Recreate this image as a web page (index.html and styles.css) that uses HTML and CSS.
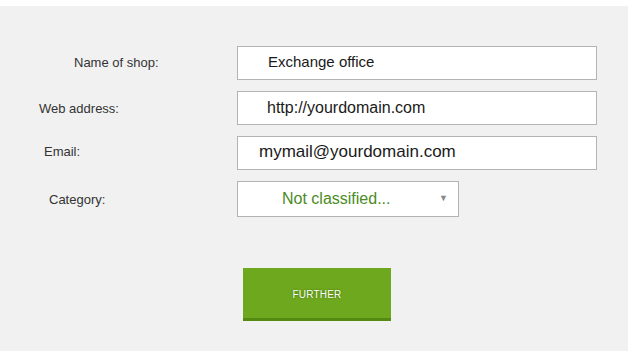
FILE: index.html
```html
<!DOCTYPE html>
<html lang="en">
<head>
    <meta charset="UTF-8">
    <meta name="viewport" content="width=device-width, initial-scale=1.0">
    <title>Shop registration</title>
    <link rel="stylesheet" href="styles.css">
</head>
<body>

    <div class="panel">
        <form class="shop-form">
            <div class="form-row">
                <label class="form-label label-name" for="shopName">Name of shop:</label>
                <input type="text" id="shopName" class="form-input input-name" value="Exchange office">
            </div>
            <div class="form-row">
                <label class="form-label label-web" for="webAddress">Web address:</label>
                <input type="text" id="webAddress" class="form-input input-web" value="http://yourdomain.com">
            </div>
            <div class="form-row">
                <label class="form-label label-email" for="email">Email:</label>
                <input type="text" id="email" class="form-input input-email" value="mymail@yourdomain.com">
            </div>
            <div class="form-row">
                <label class="form-label label-category">Category:</label>
                <div class="form-select">
                    <span class="select-value">Not classified...</span>
                    <span class="select-arrow">&#9660;</span>
                </div>
            </div>
            <div class="button-row">
                <button type="button" class="further-button">FURTHER</button>
            </div>
        </form>
    </div>

</body>
</html>
```

FILE: styles.css
```css
/* Basic Reset */
* {
    margin: 0;
    padding: 0;
    box-sizing: border-box;
}

body {
    font-family: 'Liberation Sans', Arial, sans-serif;
    background-color: #fff;
    color: #333;
}

.panel {
    width: 628px;
    height: 345px;
    margin-top: 6px;
    background-color: #f1f1f1;
    padding-top: 40px;
}

.shop-form {
    display: flex;
    flex-direction: column;
    gap: 11px;
}

.form-row {
    display: flex;
    align-items: center;
}

.form-label {
    width: 237px;
    font-size: 13px;
    color: #333;
}

/* each label sits at its own offset in the original */
.label-name { padding-left: 74px; margin-top: -2px; }
.label-web { padding-left: 39px; }
.label-email { padding-left: 44px; margin-top: -3px; }
.label-category { padding-left: 49px; }

.form-input {
    width: 360px;
    height: 34px;
    border: 1px solid #b3b3b3;
    background-color: #fff;
    font-family: 'Liberation Sans', Arial, sans-serif;
    font-size: 15px;
    color: #1a1a1a;
    outline: none;
}

.input-name { padding-left: 30px; padding-bottom: 3px; }
.input-web { padding-left: 29px; padding-bottom: 1px; font-size: 16px; }
.input-email { padding-left: 21px; padding-bottom: 2px; font-size: 17px; }

.form-select {
    width: 222px;
    height: 36px;
    border: 1px solid #b3b3b3;
    background-color: #fff;
    display: flex;
    align-items: center;
    padding-left: 44px;
    padding-right: 10px;
}

.select-value {
    flex: 1;
    font-size: 16px;
    color: #4b8b1f;
}

.select-arrow {
    font-size: 9px;
    color: #888;
    margin-top: -3px;
}

.button-row {
    padding-left: 243px;
    margin-top: 40px;
}

.further-button {
    width: 148px;
    height: 53px;
    background-color: #6ea81e;
    border: none;
    border-bottom: 3px solid #558a12;
    color: #fff;
    font-family: 'Liberation Sans', Arial, sans-serif;
    font-size: 10px;
    letter-spacing: 0.2px;
    padding-top: 2px;
    text-shadow: 0 0 2px #3d6a0a;
    cursor: pointer;
}
```
